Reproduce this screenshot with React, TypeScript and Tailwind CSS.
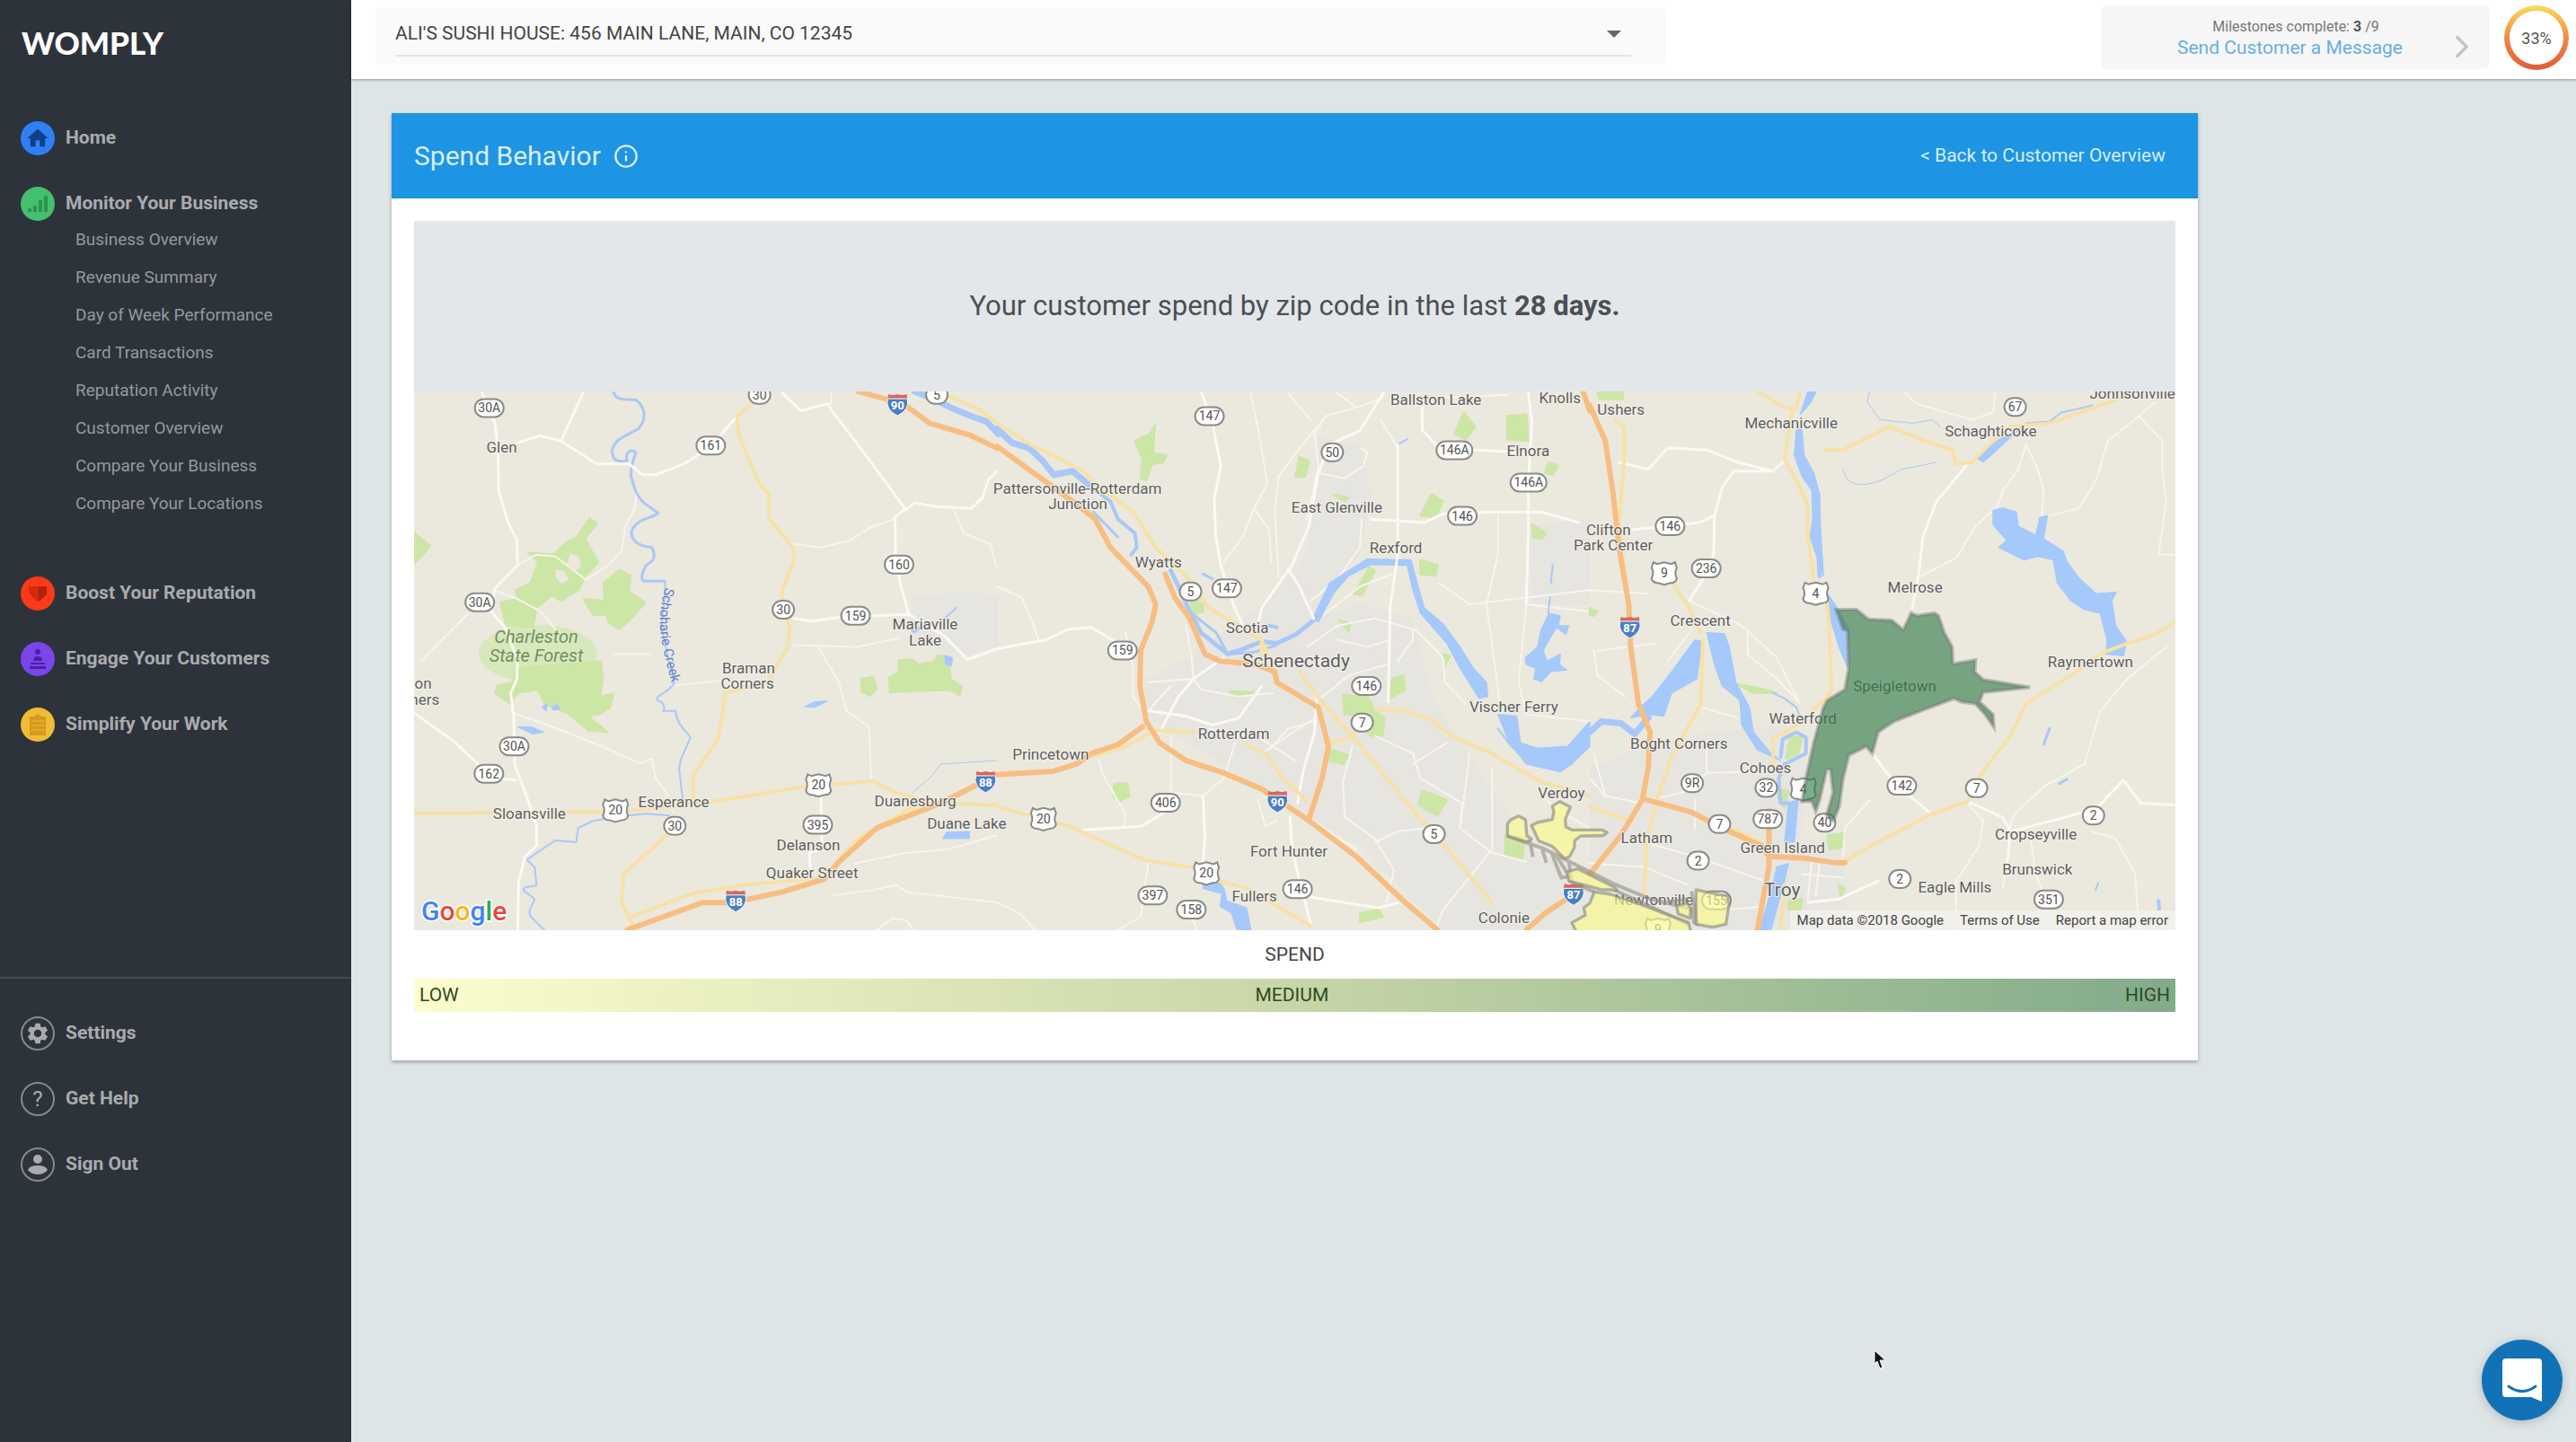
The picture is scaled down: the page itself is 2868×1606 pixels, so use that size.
import type { ReactNode } from 'react'
import { ChevronRight, Info } from 'lucide-react'
import { MdHome, MdSettings } from 'react-icons/md'

type Label = [text: string, x: number, y: number, size?: number]
type Kind = 'oval' | 'us' | 'interstate'
type Shield = [text: string, x: number, y: number, kind?: Kind]

type Tile = {
  x: number
  y: number
  sx: number
  sy: number
  urban?: string[]
  parks: string[]
  minor: string[]
  local: string[]
  water: string[]
  rivers: [d: string, width: number][]
  yellow: string[]
  orange: string[]
  labels: Label[]
  shields: Shield[]
}

const west: Tile = {
  x: -11,
  y: -16,
  sx: 0.4209,
  sy: 0.3954,
  urban: ['M1340,620 L1500,600 1570,620 1570,760 1480,790 1340,740Z'],
  parks: [
    'M25,438 L45,455 68,475 50,500 25,525Z',
    'M490,398 L510,412 478,455 512,522 480,560 460,600 415,630 390,615 350,650 340,705 270,700 255,635 300,625 295,600 335,580 355,520 330,495 395,500 430,465 458,450Z',
    'M570,543 L598,560 595,605 637,635 600,680 570,710 540,690 535,670 500,670 475,625 530,630 528,580Z',
    'M300,820 L520,800 525,850 518,900 553,892 545,930 515,950 485,955 538,1000 488,995 430,945 372,920 355,880 300,890 278,918 240,888 248,868 285,862Z',
    'M1308,798 L1345,796 1360,810 1405,800 1410,785 1440,785 1445,850 1475,872 1470,895 1440,880 1285,888 1283,845 1308,835Z',
    'M1210,850 L1240,845 1250,880 1230,898 1210,885Z',
  ],
  minor: [
    'M205,40 L240,130 248,200 250,320 275,410 298,460 300,530 240,595 230,660 270,710 300,800 298,850 282,890 290,960 292,1090 320,1170 350,1260 350,1320 320,1350 303,1420 300,1557',
    'M300,185 L360,165 415,180 510,245 595,245 630,275 665,275 740,245 790,210 840,160 880,110',
    'M415,180 L475,40',
    'M25,945 L130,1025 200,1095 240,1130 295,1135',
    'M1000,45 L1050,95 1085,85 1120,75 1135,100 1200,190 1325,370 1298,395 1300,500 1312,580 1335,670',
    'M1030,680 L1080,687 1160,675 1335,668 1430,730 1490,795 1568,765',
    'M1325,375 L1350,355 1410,365 1500,370 1530,340 1545,290 1568,265',
    'M1102,1150 L1105,1330 1072,1340 1075,1390',
  ],
  local: [
    'M300,530 L350,500 400,505 480,570 540,530 575,490 585,420 610,370 615,320',
    'M235,600 L300,625 360,660 400,710',
    'M45,800 L170,665',
    'M285,945 L380,980 500,1030 625,1088 655,1075 665,1130 700,1180',
    'M1030,470 L1100,480 1180,460 1230,425 1298,400',
    'M1030,755 L1200,760 1310,735',
    'M1095,760 L1150,860 1170,940 1230,985 1235,1130',
    'M720,868 L840,855',
    'M555,780 L650,780',
    'M1455,375 L1480,440 1550,470 1568,540',
    'M1130,1460 L1240,1445 1300,1430 1330,1450 1568,1480',
    'M1190,1370 L1330,1340 1440,1330 1568,1290',
    'M1130,75 L1130,40',
    'M1250,1557 L1290,1525 1330,1530 1345,1557',
  ],
  water: [
    'M300,985 L335,985 368,1000 340,1005Z',
    'M365,930 L378,920 375,940Z M390,930 L405,922 412,935 395,938Z',
    'M1060,928 L1085,915 1120,912 1085,930Z',
    'M1435,1282 L1495,1280 1495,1300 1425,1300Z',
    'M1430,785 L1450,790 1448,812 1432,810Z',
    'M1330,705 L1370,705 1350,720Z',
  ],
  rivers: [
    ['M553,40 C560,70 590,60 615,65 C640,90 640,120 620,145 C590,165 560,170 550,205 C550,240 570,240 590,235 C580,200 615,205 612,215 C605,240 598,250 600,280 C610,310 610,330 635,355 L672,383 C650,400 615,400 603,430 C595,460 620,475 655,480 C670,510 655,520 640,530 C625,560 625,575 640,575 L690,575', 3],
    ['M690,575 L690,610 680,700 700,800 715,860 C700,890 665,895 668,910 C690,915 690,935 685,940 L718,940 C720,980 750,1000 757,1015 C745,1050 725,1080 728,1110 L738,1200 M700,1235 L640,1230 565,1238 500,1250 460,1270 455,1310 400,1305 350,1340 325,1360 345,1380 350,1430 C340,1440 315,1430 315,1445 L345,1470 C340,1490 325,1500 335,1520 L370,1557', 2],
    ['M1345,1170 L1390,1130 1420,1090 1568,1080', 1],
    ['M1430,680 L1460,650', 2],
    ['M1350,40 L1400,62 1450,88 1500,110 1540,125 1572,160', 7],
  ],
  yellow: [
    'M940,55 L880,110 885,165 940,300 965,330 965,400 1030,480 1030,520 1000,600 1000,650 1020,700 1015,760 960,860 850,890 830,1020 765,1120 765,1190',
    'M715,1265 L690,1295 580,1400 575,1480 605,1545',
    'M25,1228 L560,1225 700,1210 850,1190 1050,1155 1240,1138 1300,1170 1400,1200 1568,1205',
    'M600,1520 L760,1455 900,1430 1110,1410 1200,1300 1340,1215 1440,1190',
    'M1400,40 L1460,62 1520,90 1568,128',
  ],
  orange: [
    'M590,1557 L660,1530 790,1480 870,1480 1000,1450 1110,1415 1150,1365 1250,1270 1420,1200 1530,1140',
    'M1200,40 L1320,75 1390,130 1500,165 1568,200',
  ],
  labels: [
    ['Glen', 258, 197],
    ['on', 50, 864],
    ['ners', 54, 908],
    ['Braman', 911, 820],
    ['Corners', 908, 863],
    ['Mariaville', 1378, 697],
    ['Lake', 1378, 741],
    ['Esperance', 713, 1198],
    ['Sloansville', 331, 1230],
    ['Duanesburg', 1352, 1194],
    ['Duane Lake', 1488, 1258],
    ['Delanson', 1069, 1318],
    ['Quaker Street', 1079, 1397],
  ],
  shields: [
    ['30A', 225, 87],
    ['161', 811, 193],
    ['30', 940, 50],
    ['30A', 200, 634],
    ['160', 1309, 528],
    ['30', 1003, 655],
    ['159', 1194, 672],
    ['30A', 291, 1040],
    ['162', 224, 1117],
    ['30', 716, 1264],
    ['395', 1094, 1261],
    ['5', 1409, 50],
    ['20', 559, 1220, 'us'],
    ['20', 1096, 1149, 'us'],
    ['90', 1305, 76, 'interstate'],
    ['88', 1538, 1138, 'interstate'],
    ['88', 877, 1474, 'interstate'],
  ],
}

const central: Tile = {
  x: 649,
  y: -16,
  sx: 0.4209,
  sy: 0.3954,
  urban: [
    'M850,170 L960,190 990,330 960,500 860,620 830,680 960,640 1100,680 1150,900 1270,1100 1420,1330 1568,1400 1568,1557 1180,1557 960,1320 640,1120 400,960 380,860 520,780 700,640 820,500 840,300Z',
    'M1400,420 L1568,400 1568,640 1420,640Z',
  ],
  parks: [
    'M418,135 L412,215 448,220 440,240 410,245 395,290 380,285 385,230 365,180 405,160Z',
    'M800,225 L825,235 815,280 790,280Z',
    'M1235,100 L1265,140 1240,175 1210,160Z',
    'M1350,110 L1400,105 1405,180 1350,175Z',
    'M1150,330 L1180,350 1160,395 1120,390Z',
    'M1415,415 L1452,440 1440,455 1420,452Z',
    'M1460,240 L1485,250 1470,275 1450,270Z',
    'M1120,515 L1165,530 1160,560 1120,555Z',
    'M985,535 L1000,545 965,615 945,610Z',
    'M915,895 L980,900 1000,940 1025,960 1020,1010 985,1010 960,950 920,950Z',
    'M1045,850 L1075,840 1080,880 1040,905Z',
    'M510,620 L545,640 545,660 520,670Z',
    'M1125,1165 L1190,1190 1165,1235 1115,1205Z',
    'M310,1145 L345,1145 350,1180 325,1195 308,1180Z',
    'M885,1050 L930,1065 915,1090 880,1080Z',
    'M905,685 L935,695 930,715Z',
    'M615,885 L680,888 640,900Z',
    'M960,1510 L1010,1500 1020,1520 960,1535Z',
    'M1180,780 L1198,785 1185,810Z',
    'M890,330 L930,340 920,350Z',
    'M1345,1290 L1395,1300 1390,1360 1345,1345Z',
  ],
  minor: [
    'M540,40 L570,130 592,250 575,340 578,440 592,530 625,640 650,700',
    'M1025,40 L960,150 880,190 850,270 825,420 780,530 700,650 690,700',
    'M1060,190 L1060,500 1040,650 1035,915',
    'M1125,85 L1125,150 1170,200 1350,210 1405,220',
    'M990,400 L1130,410 1180,385 1300,380 1440,380 1540,410',
    'M1405,40 L1415,130 1405,300 1405,460 1400,640',
    'M770,540 L800,590 838,680',
    'M545,1180 L550,1290 545,1370',
    'M0,765 L130,740 190,710 250,705 320,750',
    'M845,905 L840,1000 810,1110 795,1200',
    'M775,1240 L780,1320 800,1420 830,1540',
    'M230,1275 L380,1265 430,1235 450,1220',
    'M800,1460 L1010,1495 1060,1480',
    'M400,940 L500,955 570,980 640,960 700,870',
    'M430,1000 L480,900 520,850 600,790',
  ],
  local: [
    'M670,40 L695,170 715,300 680,370 650,450 600,520',
    'M1020,60 L950,85 870,110 800,200 745,280 735,380 745,560',
    'M870,110 L840,160 850,250 820,400',
    'M680,370 L720,430 725,520',
    'M770,45 L830,120',
    'M900,45 L950,85',
    'M850,270 L920,285 970,250 980,210 960,200',
    'M965,400 L960,480 900,570 830,630',
    'M1015,120 L1060,200',
    'M1130,60 L1350,50',
    'M1055,550 L960,590 900,640 850,680',
    'M1170,580 L1250,640 1568,600',
    'M1325,390 L1325,500 1295,640 1310,760 1335,950',
    'M1400,640 L1568,660',
    'M1400,640 L1380,860 1400,950 1568,970',
    'M820,760 L900,700 1000,680 1100,710 1100,740 1060,800',
    'M900,740 L980,760 1040,740',
    'M1105,710 L1180,790 1185,860 1240,920',
    'M850,910 L930,840 1030,810',
    'M400,860 L520,850 540,880 640,900 730,890',
    'M520,850 L515,790 500,700',
    'M0,590 L65,620 90,680 110,740',
    'M340,720 L360,820 360,900 400,960',
    'M270,1080 L280,1120 340,1230 335,1270',
    'M460,1010 L460,1170 545,1180 600,1130 630,1030',
    'M700,1060 L840,960',
    'M940,1040 L915,1140 920,1240 1000,1300 1050,1390 1030,1480',
    'M1000,1010 L1100,1060 1120,1130 1230,1200 1225,1270',
    'M820,1240 L950,1330',
    'M1000,1310 L1060,1280 1140,1270',
    'M1230,1275 L1310,1340 1400,1365',
    'M1310,1330 L1180,1500 1160,1557',
    'M1310,1330 L1310,1100',
    'M1250,1060 L1240,1150 1225,1270',
    'M1100,1090 L1190,1030',
    'M400,1370 L390,1440 380,1520 320,1557',
    'M510,1510 L530,1557',
    'M0,1480 L60,1510 100,1557',
    'M690,1190 L710,1265 740,1250',
    'M1568,1270 L1500,1230 1440,1180',
    'M400,940 L460,870',
    'M560,990 L700,1020 790,1080',
    'M720,1050 L770,990 840,970',
  ],
  water: [
    'M980,512 L1095,515 1112,580 1130,650 1180,695 1225,760 1260,820 1295,860 1298,900 1275,905 1225,820 1190,750 1120,665 1100,600 1085,530 990,528 930,560 890,610 850,690 835,680 880,580 930,545Z',
    'M1325,950 L1375,955 1385,1030 1430,1045 1510,1040 1568,970 1568,1040 1520,1090 1490,1112 1400,1090 1355,1030Z',
    'M1460,665 L1490,672 1485,700 1512,700 1505,725 1480,705 1460,740 1445,770 1455,800 1490,780 1488,810 1508,825 1465,830 1440,858 1420,850 1425,820 1400,810 1398,790 1430,760 1440,710Z',
    'M545,1425 L585,1418 600,1440 608,1475 660,1495 672,1557 635,1557 620,1510 590,1490 595,1455 545,1440Z',
  ],
  rivers: [
    ['M0,145 L40,185 85,200 120,235 150,275 200,265 245,305', 7],
    ['M245,305 L300,350 320,400 365,440 370,480 355,500', 4],
    ['M255,380 L320,450', 3],
    ['M460,545 L480,590 510,660 540,720 610,780 640,770 700,745 740,750 790,725 838,685', 5],
    ['M520,670 L580,720 610,780 680,775 740,755', 3],
    ['M1325,990 L1360,1040 1420,1090', 2],
    ['M1458,665 L1463,620 M1465,580 L1470,530', 2],
    ['M1060,190 L1085,175', 2],
    ['M545,555 L570,568', 3],
    ['M720,700 L740,705', 4],
  ],
  yellow: [
    'M0,130 L90,190 230,265 260,300 360,380 420,480 500,560 560,650 700,740 700,780',
    'M0,1210 L190,1265 390,1360 510,1380',
    'M590,1420 L660,1440 830,1545',
    'M420,995 L520,1000',
    'M660,1035 L710,1060 750,1120 820,1195',
    'M800,830 L870,930 940,1010 1100,1220 1200,1340 1310,1480',
    'M870,1035 L940,1015 960,975',
    'M1000,935 L1080,940 1150,965 1200,1010 1300,1055 1440,1140 1568,1180',
    'M250,1070 L340,1040 400,1005',
    'M700,740 L720,790',
  ],
  orange: [
    'M0,195 L110,280 200,350 260,400 300,480 400,590 420,640 410,690 380,770 378,870 395,970 430,1030 500,1080 600,1115 700,1160 820,1245 950,1350 1080,1480 1165,1557',
    'M445,555 L470,620 510,680 550,780 590,800 680,808 735,830 740,860 850,930 877,1040 860,1130 825,1245',
    'M0,1120 L150,1110 210,1090 250,1060 320,1035 385,985',
    'M1400,1557 L1450,1510 1520,1460',
    'M1550,40 L1568,95',
  ],
  labels: [
    ['Ballston Lake', 1161, 64],
    ['Knolls', 1489, 60],
    ['Elnora', 1405, 207],
    ['Pattersonville-Rotterdam', 213, 314],
    ['Junction', 214, 358],
    ['East Glenville', 899, 368],
    ['Rexford', 1055, 481],
    ['Wyatts', 427, 521],
    ['Scotia', 662, 707],
    ['Schenectady', 791, 800, 21],
    ['Vischer Ferry', 1367, 928],
    ['Rotterdam', 626, 1005],
    ['Princetown', 142, 1064],
    ['Verdoy', 1493, 1173],
    ['Fort Hunter', 772, 1335],
    ['Fullers', 681, 1463],
    ['Colonie', 1341, 1524],
  ],
  shields: [
    ['147', 562, 110],
    ['50', 887, 212],
    ['146A', 1210, 206],
    ['146A', 1406, 297],
    ['146', 1231, 391],
    ['5', 512, 604],
    ['147', 608, 595],
    ['159', 332, 770],
    ['146', 977, 870],
    ['7', 966, 973],
    ['406', 446, 1199],
    ['5', 1156, 1287],
    ['397', 412, 1460],
    ['158', 514, 1500],
    ['146', 795, 1442],
    ['20', 123, 1244, 'us'],
    ['20', 554, 1397, 'us'],
    ['90', 742, 1194, 'interstate'],
    ['87', 1525, 1455, 'interstate'],
  ],
}

const east: Tile = {
  x: 1309,
  y: -16,
  sx: 0.4337,
  sy: 0.3954,
  urban: ['M0,1100 L140,1040 300,1000 500,980 560,1100 540,1300 650,1300 660,1557 0,1557Z'],
  parks: [
    'M20,42 L85,42 85,62 25,62Z',
    'M0,650 L20,660 12,672 0,670Z',
    'M380,865 L450,880 480,890 420,890Z',
    'M515,1010 L545,1015 535,1060 505,1075Z',
    'M610,1290 L655,1285 650,1325 615,1330Z',
    'M510,1475 L545,1470 540,1505 510,1500Z',
    'M480,1160 L510,1165 500,1215 485,1190Z',
    'M640,1430 L655,1440 645,1465Z',
  ],
  minor: [
    'M970,245 L890,350 855,450 845,550 828,650',
    'M500,235 L470,265 370,265 340,310 320,390 318,500 290,570 255,630',
    'M320,390 L280,410 110,430',
    'M725,1060 L780,1140 870,1225',
    'M970,1195 L1060,1240 1080,1280 1070,1380',
    'M1080,1280 L1220,1240 1300,1215 1370,1135 1415,1200 1500,1205',
    'M75,240 L150,260 200,200 300,205 380,240 470,265',
    'M560,1480 L640,1470 740,1420',
  ],
  local: [
    'M810,45 L840,75 980,120 1035,100 1040,45',
    'M1450,70 L1410,110 1330,180 1300,290 1255,370 1180,390',
    'M1410,110 L1470,180 1470,270 1480,350 1460,500 1500,500',
    'M1120,190 L1150,260 1165,320 1160,390',
    'M1120,190 L1100,260 1060,320 1045,370',
    'M1040,370 L990,420 940,510 850,560',
    'M1480,760 L1380,850 1310,940 1270,1090 1170,1150 1090,1230 1075,1280',
    'M0,600 L150,610 M255,630 L390,700 480,790 535,910',
    'M405,710 L405,780 480,850 540,920',
    'M255,720 L200,800 M20,770 L170,750 M10,770 L20,840 90,900',
    'M10,1060 L40,1180 130,1200',
    'M290,930 L380,960 M300,1115 L300,1030',
    'M300,1115 L460,1110 M300,1115 L240,1170 160,1190',
    'M270,1190 L270,1270 M0,1370 L140,1380 250,1430',
    'M140,1310 L270,1350 450,1420',
    'M1290,1280 L1350,1300 1400,1400 1410,1557',
    'M1130,1290 L1145,1400 1170,1470',
    'M970,1200 L1010,1250 1000,1320 940,1420 940,1557',
    'M650,1350 L655,1270 720,1190',
    'M570,1360 L560,1470 M590,1370 L580,1460 M545,1400 L650,1410',
    'M360,1500 L450,1490',
    'M0,1130 L40,1180 M1070,1380 L1060,1440',
  ],
  water: [
    'M1035,375 L1060,368 1095,380 1100,420 1145,445 1155,395 1175,390 1165,455 1215,490 1225,520 1255,565 1300,610 1352,605 1340,630 1350,700 1378,745 1370,785 1325,780 1328,740 1310,665 1270,655 1235,630 1200,580 1190,515 1150,505 1115,515 1050,480 1070,460 1035,415Z',
    'M530,150 L545,150 550,220 575,270 590,330 592,420 600,560 565,450 572,400 570,320 545,280 525,220Z',
    'M540,105 L560,40 582,40 565,75Z',
    'M300,720 L345,722 358,760 375,860 410,930 420,1000 465,1060 490,1080 430,1050 390,980 385,910 340,870 320,810Z',
    'M270,740 L288,745 275,850 210,890 190,955 150,950 105,960 130,930 160,900 210,830Z',
    'M605,600 L635,650 665,710 662,820 640,760 620,690Z',
    'M1110,140 L1060,190 1010,240 990,225 1020,195Z',
    'M510,1200 L535,1190 525,1310 500,1310Z',
    'M480,1380 L510,1370 500,1420 465,1557 435,1557 470,1430Z',
  ],
  rivers: [
    ['M540,150 L540,220 560,280 585,330 585,420 590,560', 5],
    ['M0,1000 L30,970 80,975 115,1005 150,960', 7],
    ['M490,1070 L495,1020 530,1000 555,1015 555,1060 500,1090 485,1130 490,1200 520,1200', 4],
    ['M470,890 L500,905 530,930 545,970', 2],
    ['M718,40 L712,70 745,120 830,130 880,120 900,140', 1],
    ['M1120,130 L1180,125 1210,100 1290,80', 2],
    ['M1165,1035 L1180,990', 3],
    ['M1205,1145 L1225,1133', 3],
    ['M1298,1445 L1305,1425', 2],
    ['M1460,1475 L1462,1500', 4],
    ['M650,260 C660,310 700,310 750,290 L800,260 890,240', 1],
  ],
  yellow: [
    'M430,40 L500,85 530,90 540,40 M520,90 L500,230 530,290 560,360 560,450 575,570',
    'M605,600 L615,700 620,880 605,910',
    'M605,205 L650,205 770,140 860,180 930,205 940,245 980,240 1035,180 1080,140 1180,130 1310,80 1380,50',
    'M1503,690 L1450,725 1380,750 1320,775 1250,830 1120,920 1080,1010 1010,1110 970,1195 870,1235 740,1310 650,1365',
    'M65,120 L88,140 88,240 75,400 95,600',
    'M290,740 L285,920 210,1070 170,1200 145,1310 140,1460',
    'M215,585 L250,640 285,720',
    'M0,1210 L90,1245',
    'M500,1430 L490,1557',
    'M470,1110 L470,1020 540,975 600,910',
    'M360,1270 L440,1310',
  ],
  orange: [
    'M0,80 L40,180 60,330 75,480 100,640 105,760 125,920 155,1000 150,1100 135,1190 80,1290 0,1400',
    'M145,1190 L260,1225 340,1270 440,1320 460,1350 550,1355 630,1368 655,1368',
    'M460,1220 L460,1380 430,1557',
  ],
  labels: [
    ['Ushers', 80, 91],
    ['Mechanicville', 517, 131],
    ['Johnsonville', 1393, 46],
    ['Schaghticoke', 1029, 152],
    ['Clifton', 48, 430],
    ['Park Center', 60, 474],
    ['Melrose', 835, 593],
    ['Crescent', 284, 687],
    ['Raymertown', 1285, 802],
    ['Speigletown', 783, 872],
    ['Waterford', 547, 961],
    ['Boght Corners', 229, 1033],
    ['Cohoes', 451, 1100],
    ['Latham', 146, 1299],
    ['Green Island', 495, 1325],
    ['Troy', 494, 1445, 21],
    ['Cropseyville', 1145, 1289],
    ['Brunswick', 1149, 1388],
    ['Eagle Mills', 937, 1438],
    ['Newtonville', 164, 1474],
  ],
  shields: [
    ['67', 1092, 84],
    ['146', 206, 420],
    ['236', 299, 539],
    ['9R', 263, 1144],
    ['32', 453, 1157],
    ['787', 457, 1245],
    ['7', 333, 1259],
    ['40', 603, 1255],
    ['142', 801, 1151],
    ['7', 993, 1158],
    ['2', 1293, 1235],
    ['2', 278, 1362],
    ['2', 796, 1414],
    ['351', 1178, 1471],
    ['155', 325, 1474],
    ['9', 191, 552, 'us'],
    ['4', 580, 609, 'us'],
    ['4', 548, 1160, 'us'],
    ['9', 175, 1555, 'us'],
    ['87', 103, 703, 'interstate'],
  ],
}

const tiles = [west, central, east]

function Lines({ paths, stroke, width }: { paths: string[]; stroke: string; width: number }) {
  return (
    <g fill="none" stroke={stroke} strokeWidth={width} strokeLinejoin="round" strokeLinecap="round">
      {paths.map((d) => (
        <path key={d} d={d} vectorEffect="non-scaling-stroke" />
      ))}
    </g>
  )
}

function TileGround({ tile }: { tile: Tile }) {
  return (
    <g transform={`translate(${tile.x} ${tile.y}) scale(${tile.sx} ${tile.sy})`}>
      {tile.urban?.map((d) => <path key={d} d={d} fill="#e6e3e0" opacity="0.8" />)}
      {tile.parks.map((d) => <path key={d} d={d} fill="#cce6a6" stroke="#cce6a6" strokeWidth="6" strokeLinejoin="round" />)}
      <Lines paths={tile.local} stroke="#f7f5ec" width={2} />
      {tile.water.map((d) => <path key={d} d={d} fill="#a5c9fb" stroke="#a5c9fb" strokeWidth="3" strokeLinejoin="round" />)}
      {tile.rivers.map(([d, width]) => (
        <Lines key={d} paths={[d]} stroke="#a9c8f8" width={width} />
      ))}
      <Lines paths={tile.minor} stroke="#fbf9f2" width={3} />
      <Lines paths={tile.yellow} stroke="#f8e1a6" width={4} />
      <Lines paths={tile.orange} stroke="#f7be82" width={6} />
    </g>
  )
}

function RoadShield({ text, x, y, kind = 'oval' }: { text: string; x: number; y: number; kind?: Kind }) {
  if (kind === 'interstate') {
    return (
      <g transform={`translate(${x} ${y})`}>
        <path d="M-10,-11 Q-5,-9 0,-11 Q5,-9 10,-11 L11,-6 H-11Z" fill="#d9655b" />
        <path d="M-11,-6 H11 Q14,6 0,13 Q-14,6 -11,-6Z" fill="#4b7fc0" stroke="#fff" strokeWidth="1" />
        <text y="6" textAnchor="middle" fontSize="13" fontWeight="700" fill="#fff">{text}</text>
      </g>
    )
  }
  if (kind === 'us') {
    return (
      <g transform={`translate(${x} ${y})`}>
        <path d="M-12,-12 L-8,-10 L0,-12 L8,-10 L12,-12 L14,-6 Q11,0 14,6 Q13,11 7,11 L0,13 L-7,11 Q-13,11 -14,6 Q-11,0 -14,-6Z" fill="#fdfdfb" stroke="#8b8b88" strokeWidth="2" />
        <text y="5" textAnchor="middle" fontSize="14" fill="#555">{text}</text>
      </g>
    )
  }
  const half = text.length > 3 ? 20 : text.length > 2 ? 16 : 12
  return (
    <g transform={`translate(${x} ${y})`}>
      <rect x={-half} y="-10" width={half * 2} height="20" rx="10" fill="#fdfdfb" stroke="#8b8b88" strokeWidth="2" />
      <text y="5" textAnchor="middle" fontSize="14" fill="#555">{text}</text>
    </g>
  )
}

function TileLabels({ tile }: { tile: Tile }) {
  return (
    <g>
      {tile.shields.map(([text, x, y, kind]) => (
        <RoadShield key={`${text}-${x}`} text={text} x={tile.x + x * tile.sx} y={tile.y + y * tile.sy} kind={kind} />
      ))}
      {tile.labels.map(([text, x, y, size = 17]) => (
        <text
          key={`${text}-${x}`}
          x={tile.x + x * tile.sx}
          y={tile.y + y * tile.sy + size / 3}
          textAnchor="middle"
          fontSize={size}
          fill="#5e5e5e"
          stroke="#f3f1ea"
          strokeWidth="2"
          strokeLinejoin="round"
          paintOrder="stroke"
        >
          {text}
        </text>
      ))}
    </g>
  )
}

const highSpendArea =
  'M632,655 L685,655 715,682 775,685 805,712 825,665 840,672 885,665 895,672 910,720 930,760 932,808 990,797 988,830 1010,852 1130,874 1010,888 1000,915 1035,950 1037,985 1015,950 990,920 955,915 935,905 850,940 780,970 740,1000 725,1060 710,1040 665,1065 650,1130 640,1210 625,1250 608,1235 625,1170 618,1105 608,1105 590,1190 580,1222 570,1195 545,1195 555,1130 575,1030 600,930 610,910 655,880 665,820 662,715 650,710Z'

const lowSpendAreas = [
  'M85,125 L95,112 122,98 145,110 150,165 165,175 150,185 85,165Z',
  'M165,130 L185,120 235,110 240,85 235,65 260,50 295,68 278,110 280,135 300,145 400,145 418,153 405,164 330,165 310,180 308,205 292,235 275,240 235,200 190,182Z',
  'M285,285 L320,275 440,335 450,345 400,345 290,315Z',
  'M375,352 L430,360 560,405 690,455 700,495 320,495 300,455 345,430 340,405 360,390Z',
  'M650,398 L685,390 697,405 695,440 655,425Z',
  'M715,345 L760,355 820,365 825,395 815,460 770,470 715,460Z',
]

function SpendMap() {
  return (
    <div className="relative">
      <svg
        viewBox="0 0 1961 600"
        preserveAspectRatio="xMidYMid slice"
        className="block h-[600px] w-full"
        role="img"
        aria-label="Customer spend by zip code"
      >
        <rect width="1961" height="600" fill="#ebe8de" />
        <ellipse cx="138" cy="292" rx="66" ry="32" fill="#d3e7b4" opacity="0.8" />
        {tiles.map((tile) => <TileGround key={tile.x} tile={tile} />)}
        <g fill="#ebe8de">
          <path d="M174,180 L184,184 186,196 178,200 170,192Z" />
          <path d="M157,198 L167,200 172,210 164,214 158,208Z" />
        </g>
        {tiles.map((tile) => <TileLabels key={tile.x} tile={tile} />)}

        <text x="136" y="280" textAnchor="middle" fontSize="20" fontStyle="italic" fill="#70905f">Charleston</text>
        <text x="136" y="301" textAnchor="middle" fontSize="20" fontStyle="italic" fill="#70905f">State Forest</text>
        <path id="creek" d="M280,218 Q270,250 276,280 Q282,310 291,340" fill="none" />
        <text fontSize="15" fill="#5c82c8">
          <textPath href="#creek">Schoharie Creek</textPath>
        </text>

        <g transform="translate(1309 -16) scale(0.4337 0.3954)">
          <path d={highSpendArea} fill="#2f7a47" fillOpacity="0.62" stroke="#777" strokeOpacity="0.45" strokeWidth="4" vectorEffect="non-scaling-stroke" />
        </g>
        <g transform="translate(1189 440) scale(0.3333)" strokeLinejoin="round">
          <path d="M85,165 L200,205 290,250 440,325 560,375 700,410 710,460 M160,180 L170,235 M200,205 L215,255 M230,215 L265,305 290,300 M245,225 L285,290 M290,250 L300,320 M440,345 L560,400 690,460 M375,352 L290,315 M600,390 L690,375 M700,350 L720,465" fill="none" stroke="#8f8e83" strokeOpacity="0.6" strokeWidth="12" />
          {lowSpendAreas.map((d) => (
            <path key={d} d={d} fill="#fbfb8c" fillOpacity="0.65" stroke="#8f8e83" strokeOpacity="0.65" strokeWidth="10" />
          ))}
        </g>

        <text x="8" y="589" fontSize="30" fontWeight="500" stroke="#fff" strokeWidth="3" paintOrder="stroke">
          <tspan fill="#4285f4">G</tspan>
          <tspan fill="#e34a3d">o</tspan>
          <tspan fill="#f5b91d">o</tspan>
          <tspan fill="#4285f4">g</tspan>
          <tspan fill="#34a853">l</tspan>
          <tspan fill="#e34a3d">e</tspan>
        </text>
      </svg>
      <div className="absolute right-0 bottom-0 flex h-[22px] items-center gap-[18px] bg-[#f3f1ec]/80 px-2 text-[15px] text-[#444]">
        <span>Map data ©2018 Google</span>
        <a href="#terms">Terms of Use</a>
        <a href="#report">Report a map error</a>
      </div>
    </div>
  )
}

function Badge({ className, children }: { className: string; children: ReactNode }) {
  return (
    <span className={`flex size-[38px] shrink-0 items-center justify-center rounded-full ${className}`}>
      {children}
    </span>
  )
}

function NavItem({ label, icon }: { label: string; icon: ReactNode }) {
  return (
    <a href="#" className="flex h-[38px] items-center gap-3 text-[21px] font-bold text-[#a9acae]">
      {icon}
      {label}
    </a>
  )
}

const businessLinks = [
  'Business Overview',
  'Revenue Summary',
  'Day of Week Performance',
  'Card Transactions',
  'Reputation Activity',
  'Customer Overview',
  'Compare Your Business',
  'Compare Your Locations',
]

function Sidebar() {
  return (
    <aside className="w-[391px] shrink-0 bg-[#2d333a]">
      <div className="flex h-[95px] items-center px-6 font-[Lato,sans-serif] text-[35px] font-black text-white">
        WOMPLY
      </div>
      <nav className="flex flex-col gap-[35px] px-[23px] pt-10 pb-[262px]">
        <NavItem label="Home" icon={<Badge className="bg-[#2f80f5]"><MdHome className="size-[28px] text-[#103f86]" /></Badge>} />
        <div>
          <NavItem
            label="Monitor Your Business"
            icon={
              <Badge className="bg-[#45bf70]">
                <svg viewBox="0 0 24 20" className="h-5 w-6 fill-[#2a9550]">
                  <path d="M1 15h4v4H1zM7 12h4v7H7zM13 6h4v13h-4zM19 1h4v18h-4z" />
                </svg>
              </Badge>
            }
          />
          <ul className="pb-[25px] pl-[61px]">
            {businessLinks.map((link) => (
              <li key={link} className="h-[42px] text-[19px] leading-[42px] text-[#959a9e]">
                <a href="#">{link}</a>
              </li>
            ))}
          </ul>
        </div>
        <NavItem
          label="Boost Your Reputation"
          icon={
            <Badge className="bg-[#fb3a17]">
              <svg viewBox="0 0 24 24" className="size-6">
                <path d="M2 4h20v9l-5 4-5 4-5-4-5-6z" fill="#d32a10" />
                <path d="M13 4h9v9l-9 8z" fill="#b4200c" />
              </svg>
            </Badge>
          }
        />
        <NavItem
          label="Engage Your Customers"
          icon={
            <Badge className="bg-[#7b45ea]">
              <svg viewBox="0 0 24 24" className="size-6 fill-[#4c1fa8]">
                <circle cx="12" cy="4" r="3" />
                <path d="M7 14q0-5 5-5t5 5zM4 16h16v2H4zM3 20h18v3H3z" />
              </svg>
            </Badge>
          }
        />
        <NavItem
          label="Simplify Your Work"
          icon={
            <Badge className="bg-[#efbc35]">
              <svg viewBox="0 0 24 24" className="size-6">
                <path d="M3 3h5l4-3 4 3h5v21H3z" fill="#d69a1e" />
                <path d="M5 8h14M5 13h14M5 18h14" stroke="#efbc35" strokeWidth="1" />
              </svg>
            </Badge>
          }
        />
      </nav>
      <nav className="flex flex-col gap-[35px] border-t-2 border-[#454b51] px-[23px] pt-[42px]">
        <NavItem label="Settings" icon={<Badge className="border-2 border-[#85898d]"><MdSettings className="size-7" /></Badge>} />
        <NavItem label="Get Help" icon={<Badge className="border-2 border-[#85898d] text-[24px] font-normal">?</Badge>} />
        <NavItem
          label="Sign Out"
          icon={
            <Badge className="border-2 border-[#85898d]">
              <svg viewBox="0 0 24 24" className="size-6 fill-[#a9acae]">
                <circle cx="12" cy="6" r="5" />
                <path d="M1 18q2-5 11-5t11 5q-4 5-11 5T1 18z" />
              </svg>
            </Badge>
          }
        />
      </nav>
    </aside>
  )
}

function TopBar() {
  return (
    <header className="relative flex h-[88px] items-start justify-between bg-white pr-2 pl-[27px] shadow-[0_1px_3px_rgba(0,0,0,0.35)]">
      <div className="mt-2 h-[64px] w-[1438px] rounded bg-[#fafafa] px-[22px]">
        <div className="relative mr-[18px] border-b-2 border-[#e4e4e4]">
          <select
            aria-label="Location"
            className="h-[53px] w-full appearance-none bg-transparent pt-[7px] text-[21px] text-[#444] outline-none"
          >
            <option>ALI'S SUSHI HOUSE: 456 MAIN LANE, MAIN, CO 12345</option>
          </select>
          <span className="pointer-events-none absolute top-[26px] right-[11px] border-x-8 border-t-8 border-x-transparent border-t-[#666]" />
        </div>
      </div>
      <div className="flex items-start gap-4 pt-[6px]">
        <a href="#" className="flex h-[71px] w-[433px] items-center rounded-lg bg-[#f6f6f6] pr-[10px] pl-[40px]">
          <span className="flex-1 text-center">
            <span className="block pl-[13px] text-[16px] leading-[22px] text-[#777]">
              Milestones complete: <b className="text-[#555]">3</b> /9
            </span>
            <span className="block text-[21px] leading-[24px] text-[#67afe0]">Send Customer a Message</span>
          </span>
          <ChevronRight className="mt-5 size-[42px] text-[#c4c4c4]" />
        </a>
        <div className="flex size-[72px] items-center justify-center rounded-full bg-linear-to-b from-[#f8dc5c] via-[#ee8a45] to-[#e05a35] p-[6px]">
          <span className="flex size-full items-center justify-center rounded-full bg-white text-[18px] text-[#555]">33%</span>
        </div>
      </div>
    </header>
  )
}

export default function App() {
  return (
    <div className="flex min-h-screen bg-[#dee5e7] font-[Roboto,sans-serif]">
      <Sidebar />
      <div className="min-w-0 flex-1">
        <TopBar />
        <main className="px-[45px] pt-[38px]">
          <section className="max-w-[2011px] bg-white pb-[54px] shadow-[0_2px_4px_rgba(0,0,0,0.3)]">
            <div className="flex h-[95px] items-center justify-between bg-[#1e94e4] pr-9 pl-[25px] text-[#d8eefc]">
              <h1 className="flex items-center gap-[14px] text-[30px]">
                Spend Behavior
                <Info className="size-[28px]" />
              </h1>
              <a href="#" className="text-[21px]">&lt; Back to Customer Overview</a>
            </div>
            <div className="px-[25px] pt-[25px]">
              <p className="flex h-[190px] items-center justify-center bg-[#e3e7ea] text-[31px] text-[#4c4f52]">
                <span>
                  Your customer spend by zip code in the last <b>28 days.</b>
                </span>
              </p>
              <SpendMap />
              <p className="h-[54px] text-center text-[21px] leading-[54px] text-[#444]">SPEND</p>
              <div className="flex h-[37px] items-center justify-between bg-linear-to-r from-[#fdfdcd] via-[#c7d6a8] to-[#82ab8a] px-[6px] text-[21px] text-[#2f4a24]">
                <span>LOW</span>
                <span>MEDIUM</span>
                <span>HIGH</span>
              </div>
            </div>
          </section>
        </main>
      </div>

      <button
        type="button"
        aria-label="Open chat"
        className="fixed right-[15px] bottom-[24px] flex size-[90px] items-center justify-center rounded-full bg-[#1272b8] shadow-[0_2px_12px_rgba(0,0,0,0.2)]"
      >
        <svg viewBox="0 0 44 48" className="h-[48px] w-[44px]">
          <path d="M4 0h36q4 0 4 4v44l-12-5H4q-4 0-4-4V4q0-4 4-4z" fill="#fff" />
          <path d="M7 31q15 11 30 0" fill="none" stroke="#1272b8" strokeWidth="3" strokeLinecap="round" />
        </svg>
      </button>
      <svg viewBox="0 0 14 22" className="pointer-events-none fixed top-[1503px] left-[2086px] h-[22px] w-[14px]">
        <path d="M1 1v15l3-3 3 8 3-1-3-8h6z" fill="#111" stroke="#fff" strokeWidth="1" />
      </svg>
    </div>
  )
}
